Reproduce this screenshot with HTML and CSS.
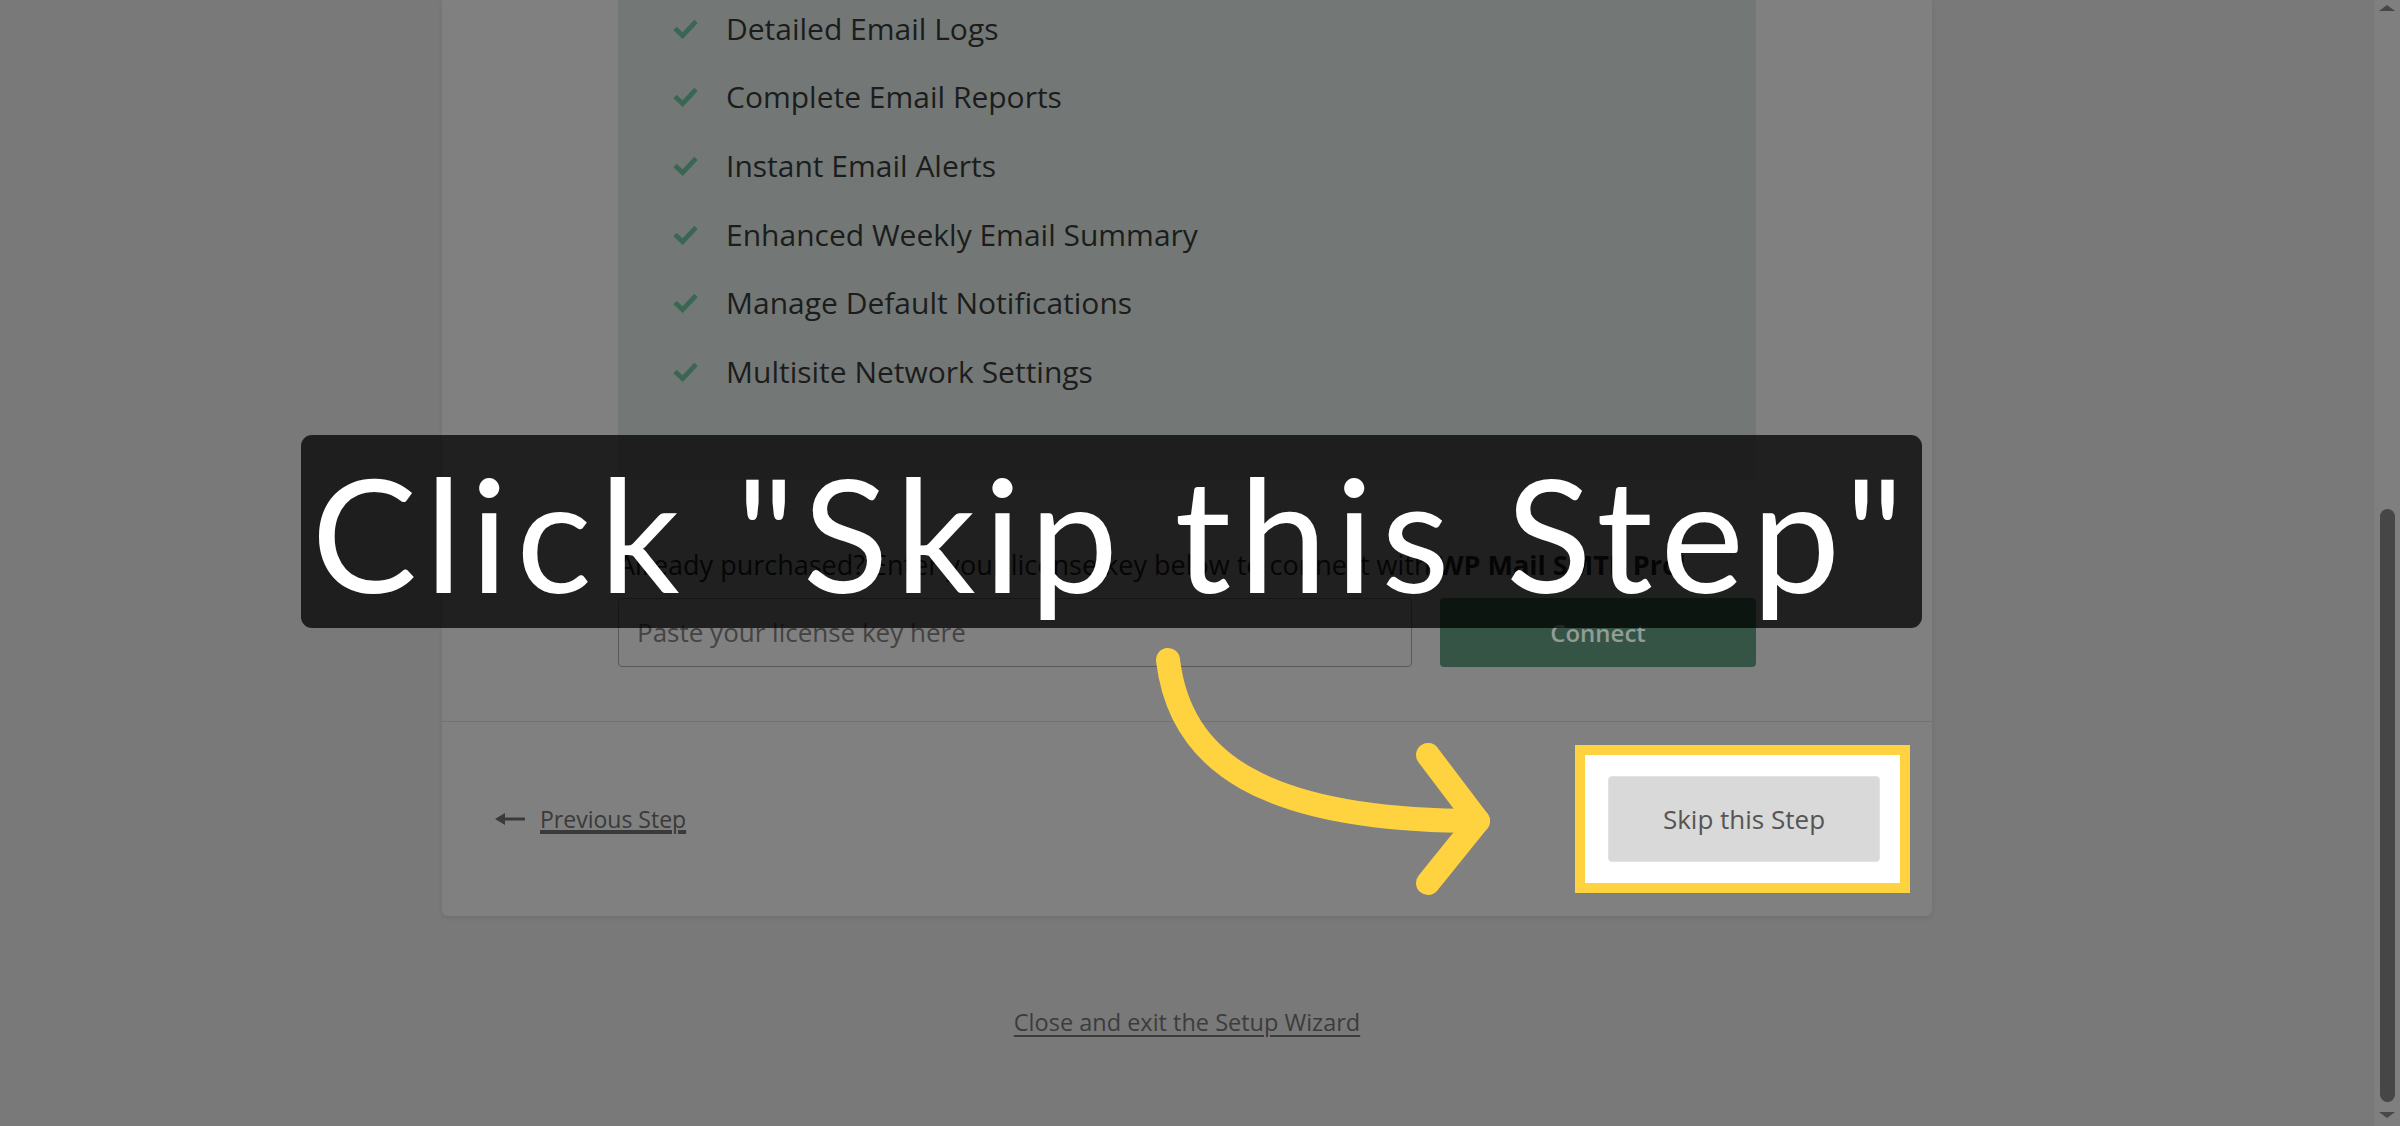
FILE: index.html
```html
<!DOCTYPE html>
<html lang="en">
<head>
  <meta charset="UTF-8" />
  <meta name="viewport" content="width=device-width, initial-scale=1.0" />
  <title>WP Mail SMTP Setup Wizard</title>
  <link rel="stylesheet" href="styles.css">
</head>
<body>
  <div class="screen">
    <main class="page">
      <section class="card">
        <div class="card-body">
          <div class="features">
            <ul class="feature-list">
              <li><svg class="check" viewBox="0 0 28 22"><path d="M3 11 L11 18.5 L25 3.5" /></svg>Detailed Email Logs</li>
              <li><svg class="check" viewBox="0 0 28 22"><path d="M3 11 L11 18.5 L25 3.5" /></svg>Complete Email Reports</li>
              <li><svg class="check" viewBox="0 0 28 22"><path d="M3 11 L11 18.5 L25 3.5" /></svg>Instant Email Alerts</li>
              <li><svg class="check" viewBox="0 0 28 22"><path d="M3 11 L11 18.5 L25 3.5" /></svg>Enhanced Weekly Email Summary</li>
              <li><svg class="check" viewBox="0 0 28 22"><path d="M3 11 L11 18.5 L25 3.5" /></svg>Manage Default Notifications</li>
              <li><svg class="check" viewBox="0 0 28 22"><path d="M3 11 L11 18.5 L25 3.5" /></svg>Multisite Network Settings</li>
            </ul>
          </div>

          <p class="license-note">Already purchased? Enter your license key below to connect with <strong>WP Mail SMTP Pro</strong>!</p>

          <form class="license-form">
            <input type="text" class="license-input" placeholder="Paste your license key here" />
            <button type="button" class="connect-btn">Connect</button>
          </form>
        </div>

        <footer class="wizard-footer">
          <a href="#" class="prev-link">
            <svg class="prev-arrow" viewBox="0 0 30 14"><path d="M0 7 L10 1 L10 5.5 L30 5.5 L30 8.5 L10 8.5 L10 13 Z" /></svg>
            <span>Previous Step</span>
          </a>
          <span class="spotlight">
            <button type="button" class="skip-btn">Skip this Step</button>
          </span>
        </footer>
      </section>

      <a href="#" class="exit-link">Close and exit the Setup Wizard</a>
    </main>

    <div class="scrollbar">
      <span class="scroll-up"></span>
      <span class="scroll-thumb"></span>
      <span class="scroll-down"></span>
    </div>

    <div class="caption">Click "Skip this Step"</div>

    <svg class="pointer" viewBox="0 0 400 280">
      <path d="M38 30 C50 130 130 191 348 191" />
      <path d="M298 125 L348 191 L298 253" />
    </svg>
  </div>
</body>
</html>
```

FILE: styles.css
```css
body {
  margin: 0;
  font-family: "Open Sans", "Noto Sans", sans-serif;
}
.screen {
  position: relative;
  display: flex;
  height: 1126px;
  overflow: hidden;
  background-color: #797979;
}
.page {
  flex: 1;
  display: flex;
  flex-direction: column;
  align-items: center;
}
.card {
  width: 1490px;
  background-color: #808080;
  border-radius: 0 0 6px 6px;
  box-shadow: 0 2px 5px rgba(0, 0, 0, 0.08);
}
.card-body {
  padding: 0 176px 54px;
}
.features {
  margin-top: -6px;
  padding: 0 0 74px 54px;
  background-color: #737876;
}
.feature-list {
  list-style: none;
  margin: 0;
  padding: 0;
}
.feature-list li {
  display: flex;
  align-items: center;
  gap: 27px;
  height: 68.6px;
  font-size: 30px;
  color: #1c1c1c;
}
.check {
  width: 27px;
  height: 21px;
  flex-shrink: 0;
}
.check path {
  fill: none;
  stroke: #3b6654;
  stroke-width: 5;
}
.license-note {
  margin: 68px 0 0;
  font-size: 27px;
  line-height: 34px;
  color: #161616;
}
.license-note strong {
  font-weight: 700;
}
.license-form {
  display: flex;
  gap: 28px;
  margin-top: 16px;
}
.license-input {
  flex: 1;
  height: 69px;
  box-sizing: border-box;
  padding: 0 18px;
  border: 1px solid #5a5a5a;
  border-radius: 4px;
  background: transparent;
  font-family: inherit;
  font-size: 26px;
  color: #333;
}
.license-input::placeholder {
  color: #434343;
}
.connect-btn {
  width: 316px;
  height: 69px;
  border: none;
  border-radius: 4px;
  background-color: #365446;
  color: #939d98;
  font-family: inherit;
  font-size: 24px;
  font-weight: 600;
}
.wizard-footer {
  display: flex;
  align-items: center;
  justify-content: space-between;
  padding: 54px 52px 54px 53px;
  border-top: 1px solid #737373;
}
.prev-link {
  display: flex;
  align-items: center;
  gap: 15px;
  font-size: 23px;
  color: #3a3a3a;
}
.prev-link span {
  text-decoration: underline;
  text-underline-offset: 4px;
}
.prev-arrow {
  width: 30px;
  height: 14px;
  fill: #3a3a3a;
}
.spotlight {
  position: relative;
  isolation: isolate;
  display: flex;
}
.spotlight::before {
  content: "";
  position: absolute;
  top: -31px;
  bottom: -31px;
  left: -33px;
  right: -30px;
  box-sizing: border-box;
  border: 10px solid #ffd23f;
  background-color: #fff;
  z-index: -1;
}
.skip-btn {
  width: 272px;
  height: 86px;
  border: 1px solid #e2e2e2;
  border-radius: 4px;
  background-color: #d9d9d9;
  color: #555;
  font-family: inherit;
  font-size: 26px;
}
.exit-link {
  margin-top: 90px;
  font-size: 23.5px;
  line-height: 32px;
  color: #3c3c3c;
  text-underline-offset: 4px;
}
.scrollbar {
  width: 26px;
  display: flex;
  flex-direction: column;
  align-items: center;
  padding: 5px 0 8px;
  box-sizing: border-box;
  background-color: #7f7f7f;
}
.scroll-up,
.scroll-down {
  width: 0;
  height: 0;
  border-left: 8px solid transparent;
  border-right: 8px solid transparent;
}
.scroll-up {
  border-bottom: 6px solid #474747;
}
.scroll-down {
  border-top: 6px solid #474747;
}
.scroll-thumb {
  width: 15px;
  height: 593px;
  margin: auto 0 10px;
  border-radius: 8px;
  background-color: #464646;
}
.caption {
  position: absolute;
  left: 301px;
  top: 435px;
  width: 1621px;
  height: 193px;
  display: flex;
  align-items: center;
  justify-content: center;
  border-radius: 11px;
  background-color: rgba(0, 0, 0, 0.75);
  color: #fff;
  font-family: Lato, sans-serif;
  font-size: 158px;
  letter-spacing: 8px;
  white-space: nowrap;
}
.pointer {
  position: absolute;
  left: 1130px;
  top: 630px;
  width: 400px;
  height: 280px;
}
.pointer path {
  fill: none;
  stroke: #ffd23f;
  stroke-width: 24;
  stroke-linecap: round;
  stroke-linejoin: round;
}
```
